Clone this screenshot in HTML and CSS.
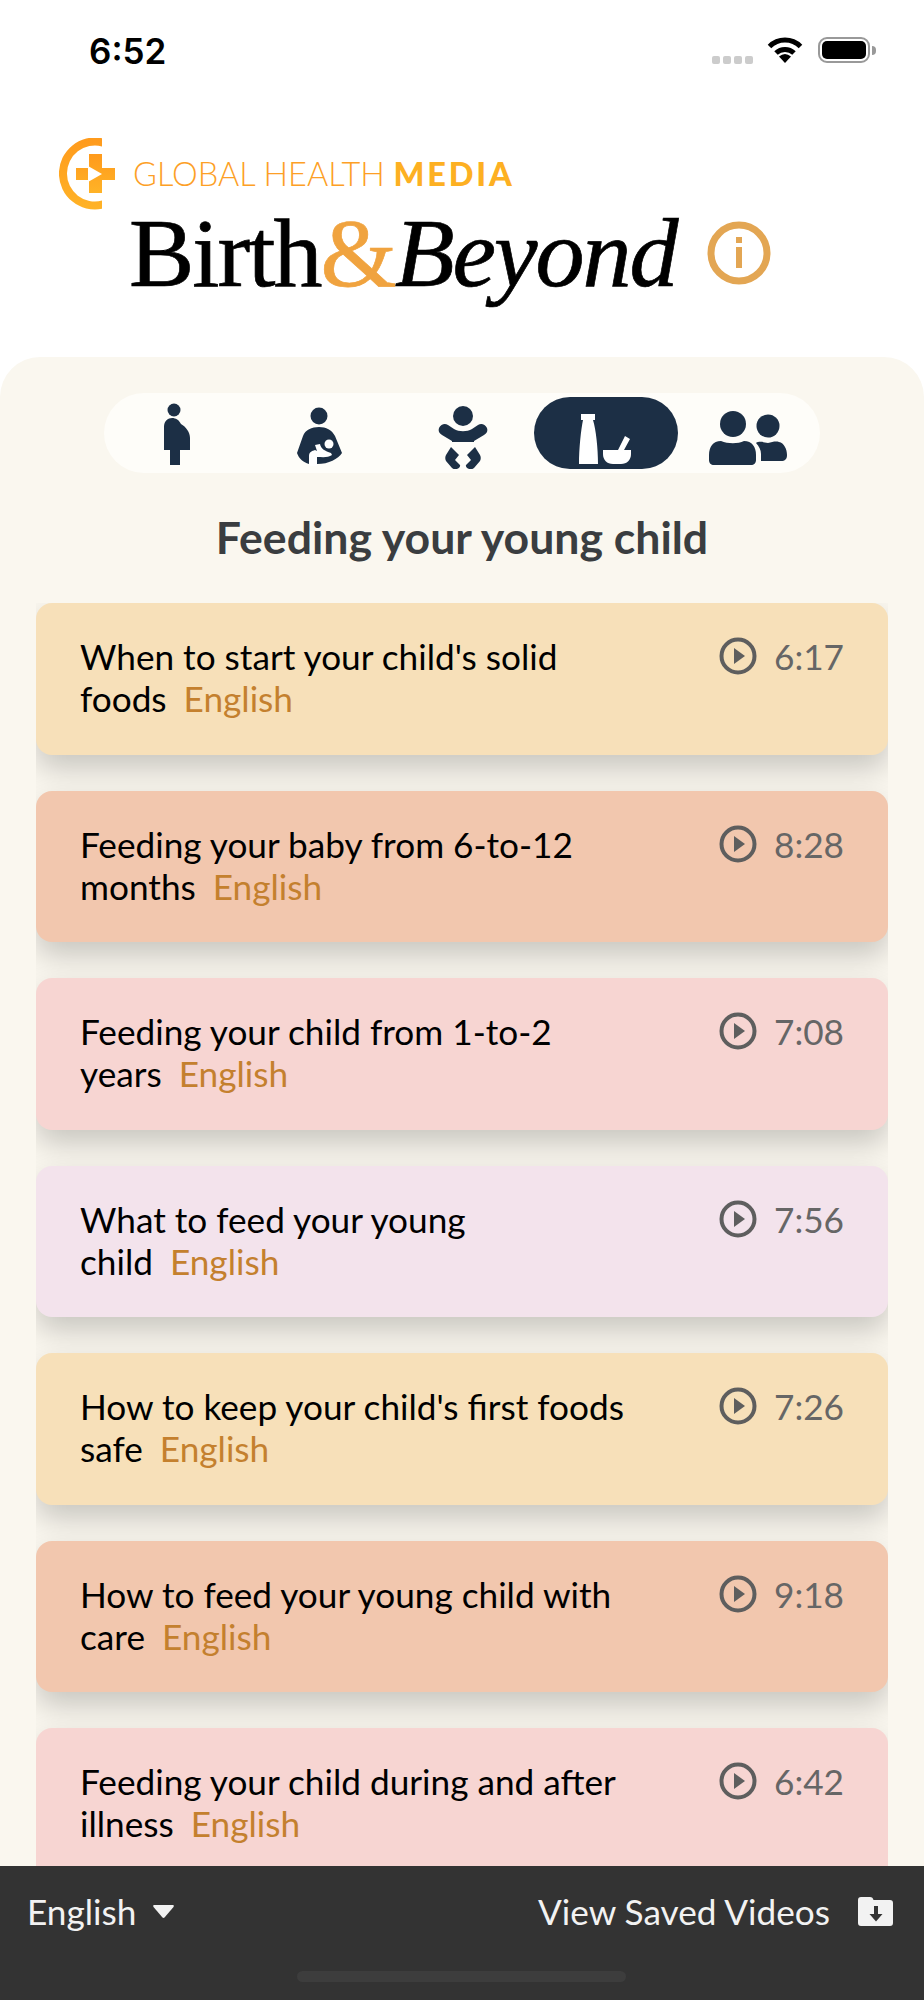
FILE: index.html
```html
<!DOCTYPE html>
<html lang="en">
<head>
<meta charset="utf-8">
<title>Birth &amp; Beyond</title>
<link rel="stylesheet" href="styles.css">
</head>
<body>
<div class="screen">
  <header class="top">
    <div class="status">
      <span class="clock">6:52</span>
      <div class="status-icons">
        <div class="signal"><i></i><i></i><i></i><i></i></div>
        <svg class="wifi" viewBox="0 0 36 26"><path class="wifi-arc" d="M2.500 9.500A22 22 0 0 1 33.500 9.500"/><path class="wifi-arc" d="M9 16A13 13 0 0 1 27 16"/><path d="M12 19.500Q18 14.500 24 19.500L18 26Z"/></svg>
        <div class="battery"><div class="battery-fill"></div></div>
        <div class="battery-tip"></div>
      </div>
    </div>
    <div class="brand">
      <svg class="brand-mark" viewBox="0 0 60 72">
        <defs>
          <linearGradient id="gm" x1="0" y1="0" x2="0" y2="1"><stop offset="0" stop-color="#ff9a1c"/><stop offset="1" stop-color="#ffb327"/></linearGradient>
        </defs>
        <path d="M43 .2A36 36 0 1 0 43 70.800V62.600A28 28 0 1 1 43 8.400Z" fill="url(#gm)"/>
        <path d="M30 16H43V30H56V42H43V55H30V42H17V30H30Z" fill="url(#gm)"/>
        <path d="M29 28L43 36L29 44Z" fill="#fff"/>
      </svg>
      <span class="brand-name">GLOBAL HEALTH <b>MEDIA</b></span>
    </div>
    <div class="title-row">
      <div class="wordmark">Birth<span class="amp">&amp;</span><em>Beyond</em></div>
      <svg class="info" viewBox="0 0 64 64"><circle cx="32" cy="32" r="28" fill="none" stroke="#e3a653" stroke-width="7"/><rect x="29" y="26" width="6" height="21" fill="#e3a653"/><rect x="29" y="16" width="6" height="6" fill="#e3a653"/></svg>
    </div>
  </header>

  <main class="panel">
    <nav class="tabs">
      <div class="tab">
        <svg viewBox="101 397 144 72"><circle cx="173" cy="410" r="6.500"/><path d="M163 450V427C163 416 176 415 180 424C185 427 189 432 189 438V450H179V465H169V450Z"/></svg>
      </div>
      <div class="tab">
        <svg viewBox="245 397 144 72"><circle cx="318" cy="416" r="8.500"/><path d="M296 453L302 436C304 430 311 427 318 427C325 427 331 430 334 436L341 453C337 459 328 464 316 464H308C302 462 298 459 296 453Z"/><path class="cut" d="M308 466V456C308 452 311 451 314 450L316 451L314 445L319 444C320 449 324 451 330 453L331 455C327 458 321 457 316 457V466Z"/><circle class="cut" cx="328" cy="444" r="4.500"/></svg>
      </div>
      <div class="tab">
        <svg viewBox="389 397 144 72"><circle cx="462" cy="416" r="10"/><path d="M438 428C440 424 444 423 447 425L453 429C458 432 466 432 471 429L477 425C480 423 484 424 486 428C487 431 486 433 483 435L473 441V442H451V441L441 435C438 433 437 431 438 428Z"/><path d="M450 447L458 455L454 460L459 465C460 468 454 471 451 468L445 461C444 459 444 457 445 455Z"/><path d="M474 447L479 455C480 457 480 459 479 461L473 468C470 471 464 468 465 465L470 460L466 455Z"/></svg>
      </div>
      <div class="tab tab-on">
        <svg viewBox="533 397 144 72"><path class="cut" d="M580 414H594V420H592C595 430 597 448 597 464H578C578 448 580 430 582 420H580Z"/><path class="cut" d="M602 450H617L624 436L629 439L623 450H630V454C630 460 626 464 620 464H612C606 464 602 460 602 454Z"/></svg>
      </div>
      <div class="tab">
        <svg viewBox="677 397 144 72"><circle cx="732" cy="424" r="13"/><path d="M708 455C708 447 712 441 720 441C727 444 737 444 743 441C751 441 755 447 755 455V460C755 463 753 465 750 465H713C710 465 708 463 708 460Z"/><circle cx="767" cy="426" r="11.500"/><path d="M755 443C758 441 762 442 767 443C771 442 775 441 778 442C783 443 786 449 786 455C786 459 784 461 780 461H760V454C760 450 758 446 755 443Z"/></svg>
      </div>
    </nav>
    <h1 class="section-title">Feeding your young child</h1>
    <div class="list">
      <article class="card c-yellow">
        <p class="card-title">When to start your child's solid foods&nbsp;<span class="lang">English</span></p>
        <div class="meta"><svg class="play" viewBox="0 0 38 38"><circle cx="19" cy="19" r="16.500"/><path d="M15 11L26 19L15 27Z"/></svg><span>6:17</span></div>
      </article>
      <article class="card c-peach">
        <p class="card-title">Feeding your baby from 6-to-12 months&nbsp;<span class="lang">English</span></p>
        <div class="meta"><svg class="play" viewBox="0 0 38 38"><circle cx="19" cy="19" r="16.500"/><path d="M15 11L26 19L15 27Z"/></svg><span>8:28</span></div>
      </article>
      <article class="card c-pink">
        <p class="card-title">Feeding your child from 1-to-2 years&nbsp;<span class="lang">English</span></p>
        <div class="meta"><svg class="play" viewBox="0 0 38 38"><circle cx="19" cy="19" r="16.500"/><path d="M15 11L26 19L15 27Z"/></svg><span>7:08</span></div>
      </article>
      <article class="card c-lilac">
        <p class="card-title">What to feed your young child&nbsp;<span class="lang">English</span></p>
        <div class="meta"><svg class="play" viewBox="0 0 38 38"><circle cx="19" cy="19" r="16.500"/><path d="M15 11L26 19L15 27Z"/></svg><span>7:56</span></div>
      </article>
      <article class="card c-yellow">
        <p class="card-title">How to keep your child's first foods safe&nbsp;<span class="lang">English</span></p>
        <div class="meta"><svg class="play" viewBox="0 0 38 38"><circle cx="19" cy="19" r="16.500"/><path d="M15 11L26 19L15 27Z"/></svg><span>7:26</span></div>
      </article>
      <article class="card c-peach">
        <p class="card-title">How to feed your young child with care&nbsp;<span class="lang">English</span></p>
        <div class="meta"><svg class="play" viewBox="0 0 38 38"><circle cx="19" cy="19" r="16.500"/><path d="M15 11L26 19L15 27Z"/></svg><span>9:18</span></div>
      </article>
      <article class="card c-pink">
        <p class="card-title">Feeding your child during and after illness&nbsp;<span class="lang">English</span></p>
        <div class="meta"><svg class="play" viewBox="0 0 38 38"><circle cx="19" cy="19" r="16.500"/><path d="M15 11L26 19L15 27Z"/></svg><span>6:42</span></div>
      </article>
    </div>
  </main>

  <footer class="bottom">
    <div class="bottom-row">
      <div class="picker">English<svg class="caret" viewBox="0 0 21 13"><path d="M1 0H20C21 0 21 1 20.500 2L11.500 12.500C11 13 10 13 9.500 12.500L.5 2C0 1 0 0 1 0Z"/></svg></div>
      <div class="saved">View Saved Videos<svg class="folder" viewBox="0 0 35 29"><path d="M0 3C0 1 1 0 3 0H12C14 0 15 1 15.500 3H32C34 3 35 4 35 6V26C35 28 34 29 32 29H3C1 29 0 28 0 26Z" fill="#f2f2f2"/><path d="M16 9H20V17H24.500L18 24.500L11.500 17H16Z" fill="#333"/></svg></div>
    </div>
    <div class="home-bar"></div>
  </footer>
</div>
</body>
</html>
```
FILE: styles.css
```css
* { box-sizing: border-box; }
html, body { margin: 0; padding: 0; background: #fff; }
.screen { width: 924px; height: 2000px; display: flex; flex-direction: column; overflow: hidden; font-family: Lato, "Noto Sans", sans-serif; }

.top { height: 357px; flex: none; display: flex; flex-direction: column; background: #fff; }
.status { height: 101px; flex: none; display: flex; justify-content: space-between; align-items: flex-start; padding: 33px 48px 0 89px; }
.clock { font-family: Inter, sans-serif; font-weight: 600; font-size: 35px; line-height: 36px; color: #000; }
.status-icons { display: flex; align-items: flex-start; padding-top: 4px; }
.signal { display: flex; gap: 3px; margin: 19px 14px 0 0; }
.signal i { width: 8px; height: 8px; border-radius: 2px; background: #ccc; }
.wifi { width: 36px; height: 26px; margin-right: 15px; fill: #000; }
.wifi-arc { fill: none; stroke: #000; stroke-width: 5px; }
.battery { width: 52px; height: 26px; border: 2.500px solid #999; border-radius: 9px; padding: 2px; }
.battery-fill { width: 100%; height: 100%; background: #000; border-radius: 5px; }
.battery-tip { width: 4px; height: 9px; margin: 9px 0 0 2px; background: #999; border-radius: 0 4px 4px 0; }

.brand { display: flex; align-items: center; height: 71px; margin-top: 37px; padding-left: 59px; }
.brand-mark { width: 60px; height: 72px; flex: none; }
.brand-name { margin-left: 14px; font-size: 32.500px; font-weight: 300; line-height: 40px; color: #fd9f26; white-space: nowrap; }
.brand-name b { font-weight: 900; letter-spacing: 2.800px; color: #fdb022; }
.title-row { display: flex; align-items: center; padding-left: 129px; height: 90px; margin-top: -1px; }
.wordmark { font-family: "Liberation Serif", serif; font-size: 98px; line-height: 90px; letter-spacing: -2px; color: #000; -webkit-text-stroke: .7px currentColor; white-space: nowrap; }
.wordmark em { font-style: italic; }
.amp { color: #f0a33f; }
.info { width: 64px; height: 64px; margin-left: 30px; flex: none; }

.panel { flex: 1; min-height: 0; display: flex; flex-direction: column; background: #faf7ef; border-radius: 40px 40px 0 0; padding-top: 36px; }
.tabs { width: 716px; height: 80px; margin: 0 auto; display: flex; justify-content: center; align-items: center; background: #fefdf9; border-radius: 40px; }
.tab { flex: 0 0 144px; height: 72px; }
.tab svg { display: block; width: 144px; height: 72px; fill: #1c2f45; }
.tab svg .cut { fill: #fff; }
.tab-on { background: #1c2f45; border-radius: 36px; }
.section-title { margin: 40px 0 0; text-align: center; font-size: 44.600px; line-height: 48px; font-weight: 700; color: #3a3d40; }
.list { flex: 1; min-height: 0; margin: 42px 36px 0; display: flex; flex-direction: column; gap: 36px; overflow: hidden; padding-bottom: 40px; }

.card { flex: none; height: 151.500px; padding: 32px 44px 35px 44px; display: flex; justify-content: space-between; align-items: flex-start; border-radius: 16px; box-shadow: 0 14px 30px rgba(0, 0, 0, .2); }
.c-yellow { background: #f7e0b9; }
.c-peach { background: #f2c7ae; }
.c-pink { background: #f7d5d2; }
.c-lilac { background: #f3e3ec; }
.card-title { margin: 0; width: 550px; font-size: 35.200px; line-height: 42px; font-weight: 400; color: #000; }
.lang { margin-left: 8px; color: #c4802e; }
.meta { display: flex; align-items: center; gap: 17px; font-size: 35.200px; line-height: 42px; color: #666; }
.play { width: 38px; height: 38px; fill: #5e5e5e; stroke: none; }
.play circle { fill: none; stroke: #5e5e5e; stroke-width: 4px; }

.bottom { flex: none; height: 134px; background: #333; position: relative; z-index: 1; padding: 24px 31px 0 27px; color: #f2f2f2; }
.bottom-row { display: flex; justify-content: space-between; align-items: center; font-size: 35.200px; line-height: 42px; }
.picker { display: flex; align-items: center; gap: 17px; }
.caret { width: 21px; height: 13px; fill: #f2f2f2; }
.saved { display: flex; align-items: center; gap: 28px; }
.folder { width: 35px; height: 29px; }
.home-bar { width: 329px; height: 11px; margin: 39px 0 0 270px; background: #3d3d3d; border-radius: 6px; }
```
